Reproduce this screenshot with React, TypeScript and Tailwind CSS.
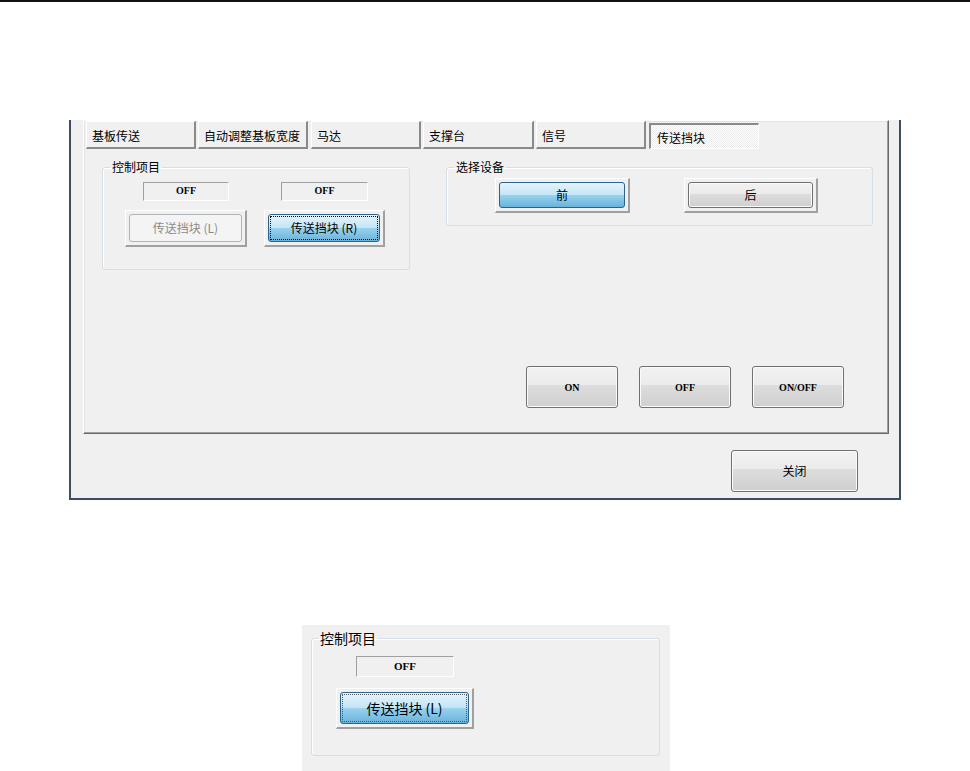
import React from 'react';

const cjk = "font-['Noto_Sans_CJK_SC',sans-serif]";
const mono = "font-['Liberation_Serif',serif] font-bold";

const tabs = [
  { label: '基板传送', cls: 'w-[110px]' },
  { label: '自动调整基板宽度', cls: 'w-[110px] ml-[2px]' },
  { label: '马达', cls: 'w-[110px] ml-[3px]' },
  { label: '支撑台', cls: 'w-[111px] ml-[2px]' },
  { label: '信号', cls: 'w-[110px] ml-[2px]' },
  { label: '传送挡块', cls: 'w-[110px] ml-[3px]', active: true },
];

const normalBtn =
  'rounded-[3px] border border-[#707070] bg-[linear-gradient(#f2f2f2_0%,#ebebeb_45%,#dddddd_46%,#cfcfcf_100%)] shadow-[inset_0_0_0_1px_#fbfbfb]';
const blueBtn =
  'rounded-[3px] border border-[#2c628b] bg-[linear-gradient(#e5f4fc_0%,#c4e5f6_48%,#98d1ef_52%,#68b3db_100%)]';

function Tab({ label, cls, active }: { label: string; cls: string; active?: boolean }) {
  if (active) {
    return (
      <div
        className={`${cls} mt-[2px] h-[26px] flex items-center pl-[6px] pt-[3px] text-[12px] text-black border-t-2 border-l-2 border-t-[#8a8a8a] border-l-[#8a8a8a] border-b border-r border-white bg-[#f7f7f7] bg-[image:repeating-conic-gradient(#ffffff_0_25%,#ebebeb_0_50%)] bg-[length:2px_2px]`}
      >
        {label}
      </div>
    );
  }
  return (
    <div
      className={`${cls} h-[28px] flex items-center pl-[5px] pt-[3px] text-[12px] text-black border-t border-l border-white border-r-2 border-b-2 border-r-[#8a8a8a] border-b-[#8a8a8a] bg-[#f0f0f0]`}
    >
      {label}
    </div>
  );
}

function Frame({ children, className }: { children: React.ReactNode; className: string }) {
  return (
    <div className={`${className} flex p-[3px] border-t border-l border-white border-r-2 border-b-2 border-r-[#a0a0a0] border-b-[#a0a0a0] bg-[#f0f0f0]`}>
      {children}
    </div>
  );
}

function Readout({ className, text = 'OFF' }: { className: string; text?: string }) {
  return (
    <div className={`flex justify-center border-t border-l border-[#a0a0a0] border-b-white border-r-white border-b border-r bg-[#f0f0f0] ${mono} text-[10px] leading-[14px] pt-[1px] text-black ${className}`}>
      {text}
    </div>
  );
}

function Group({ title, className, children, big }: { title: string; className: string; children: React.ReactNode; big?: boolean }) {
  return (
    <fieldset className={`${className} rounded-[3px] border border-[#d5dfe5] shadow-[inset_1px_1px_0_#ffffff]`}>
      <legend className={`${big ? 'ml-[6px] text-[14px] leading-[14px]' : 'ml-[7px] text-[12px] leading-[12px]'} px-[2px] text-black`}>{title}</legend>
      {children}
    </fieldset>
  );
}

export default function App() {
  return (
    <div className={`relative w-[970px] h-[771px] bg-white overflow-hidden ${cjk}`}>
      <div className="h-[2px] bg-[#111111]" />

      {/* dialog */}
      <div className="mt-[118px] ml-[69px] w-[832px] h-[380px] flex flex-col border-l-2 border-r-2 border-b-2 border-[#3e4d61] bg-[#f0f0f0]">
        <div className="ml-[12px] w-[806px] h-[314px] flex flex-col border-t border-l border-white border-r border-b border-r-[#696969] border-b-[#696969] shadow-[inset_-1px_-1px_0_#a0a0a0,inset_1px_1px_0_#e3e3e3]">
          <div className="flex items-start pl-[2px] h-[28px]">
            {tabs.map((t) => (
              <Tab key={t.label} {...t} />
            ))}
          </div>

          <div className="flex items-start mt-[12px]">
            <Group title="控制项目" className="ml-[18px] w-[308px] h-[109px]">
              <div className="flex pt-[9px] pl-[22px] gap-[17px]">
                <div className="w-[122px] flex flex-col items-center">
                  <Readout className="w-[86px] h-[19px]" />
                  <Frame className="mt-[9px] w-[122px] h-[37px]">
                    <div className="flex-1 rounded-[3px] border border-[#adb2b5] bg-[#f4f4f4] flex items-center justify-center text-[12px] text-[#8a8a8a]">
                      传送挡块 (L)
                    </div>
                  </Frame>
                </div>
                <div className="w-[121px] flex flex-col items-center">
                  <Readout className="w-[87px] h-[19px]" />
                  <Frame className="mt-[9px] w-[121px] h-[37px]">
                    <div className={`flex-1 ${blueBtn} flex items-center justify-center text-[12px] text-black outline outline-1 outline-dotted outline-black outline-offset-[-3px]`}>
                      传送挡块 (R)
                    </div>
                  </Frame>
                </div>
              </div>
            </Group>

            <Group title="选择设备" className="ml-[36px] w-[427px] h-[65px]">
              <div className="flex pt-[5px] pl-[48px] gap-[54px]">
                <Frame className="w-[135px] h-[35px]">
                  <div className={`flex-1 ${blueBtn} flex items-center justify-center text-[12px] text-black`}>前</div>
                </Frame>
                <Frame className="w-[134px] h-[35px]">
                  <div className={`flex-1 ${normalBtn} flex items-center justify-center text-[12px] text-black`}>后</div>
                </Frame>
              </div>
            </Group>
          </div>

          <div className="mt-[96px] flex justify-end pr-[44px] gap-[21px]">
            {['ON', 'OFF', 'ON/OFF'].map((l) => (
              <button key={l} className={`w-[92px] h-[42px] ${normalBtn} ${mono} text-[10px] text-black flex items-center justify-center`}>
                {l}
              </button>
            ))}
          </div>
        </div>

        <div className="mt-[16px] flex justify-end pr-[41px]">
          <button className={`w-[127px] h-[42px] ${normalBtn} text-[12px] text-black flex items-center justify-center`}>关闭</button>
        </div>
      </div>

      {/* enlarged detail */}
      <div className="mt-[125px] ml-[302px] w-[368px] h-[146px] bg-[#f0f0f0] flex flex-col">
        <Group title="控制项目" big className="mt-[6px] ml-[9px] w-[349px] h-[125px]">
          <div className="pt-[11px] pl-[24px]">
            <div className="w-[138px] flex flex-col items-center">
              <Readout className="w-[98px] h-[21px] text-[11px] leading-[16px]" />
              <Frame className="mt-[11px] w-[138px] h-[41px]">
                <div className={`flex-1 ${blueBtn} flex items-center justify-center text-[14px] text-black outline outline-1 outline-dotted outline-[#555555] outline-offset-[-3px]`}>
                  传送挡块 (L)
                </div>
              </Frame>
            </div>
          </div>
        </Group>
      </div>
    </div>
  );
}
